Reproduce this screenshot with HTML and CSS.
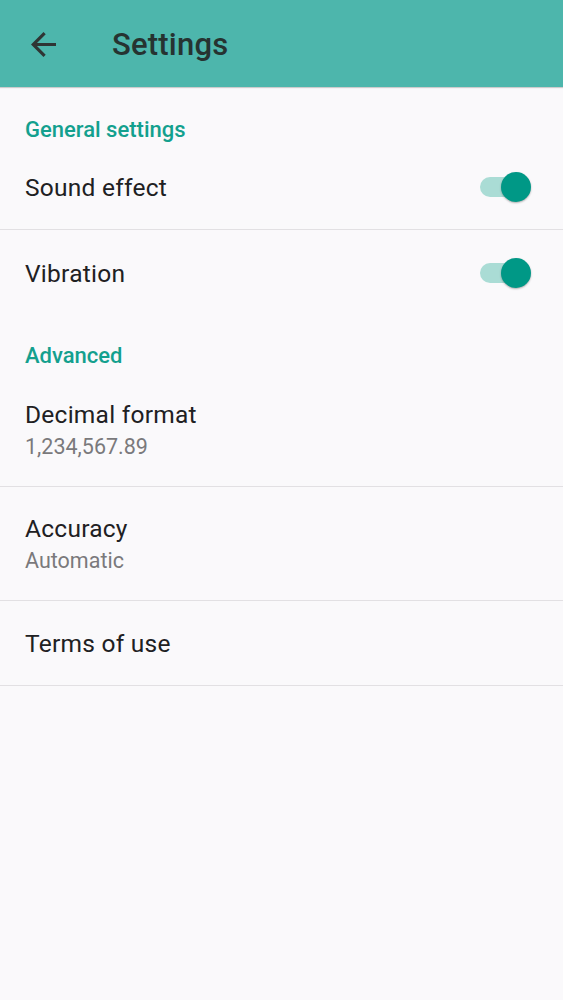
FILE: index.html
```html
<!DOCTYPE html>
<html lang="en">
<head>
<meta charset="utf-8">
<title>Settings</title>
<link rel="stylesheet" href="styles.css">
</head>
<body>
<header class="appbar">
  <svg class="back" viewBox="4 4 16 16" aria-hidden="true"><path d="M20 11H7.83l5.59-5.59L12 4l-8 8 8 8 1.41-1.41L7.83 13H20v-2z" fill="#2f3534"/></svg>
  <h1 class="title">Settings</h1>
</header>
<main class="list">
  <div class="category">General settings</div>
  <div class="row row-single row-divider">
    <span class="row-title">Sound effect</span>
    <span class="switch"><span class="track"></span><span class="thumb"></span></span>
  </div>
  <div class="row row-single">
    <span class="row-title">Vibration</span>
    <span class="switch"><span class="track"></span><span class="thumb"></span></span>
  </div>
  <div class="category category-second">Advanced</div>
  <div class="row row-double row-divider">
    <div class="row-text">
      <span class="row-title">Decimal format</span>
      <span class="row-sub">1,234,567.89</span>
    </div>
  </div>
  <div class="row row-double row-divider">
    <div class="row-text">
      <span class="row-title">Accuracy</span>
      <span class="row-sub">Automatic</span>
    </div>
  </div>
  <div class="row row-single row-divider">
    <span class="row-title">Terms of use</span>
  </div>
</main>
</body>
</html>
```

FILE: styles.css
```css
html, body {
  margin: 0;
  padding: 0;
}
body {
  background: #faf9fb;
  font-family: Roboto, "Noto Sans", "Liberation Sans", sans-serif;
  color: #212121;
  width: 563px;
  min-height: 1000px;
}
.appbar {
  height: 87px;
  background: #4db6ac;
  display: flex;
  align-items: center;
  box-shadow: 0 1px 1px rgba(0, 0, 0, 0.18);
  position: relative;
}
.back {
  width: 25px;
  height: 25px;
  margin-left: 31px;
  margin-top: 1px;
}
.title {
  margin: 2px 0 0 56px;
  font-size: 31px;
  font-weight: 500;
  letter-spacing: 0.2px;
  color: #263331;
  line-height: 1;
}
.list {
  display: flex;
  flex-direction: column;
}
.category {
  height: 58px;
  box-sizing: border-box;
  padding: 31px 25px 0;
  line-height: 24px;
  font-size: 22px;
  font-weight: 500;
  color: #13a08e;
}
.category-second {
  padding-top: 29px;
}
.row {
  display: flex;
  align-items: center;
  justify-content: space-between;
  padding: 0 32px 0 25px;
  box-sizing: border-box;
}
.row-divider {
  border-bottom: 1.5px solid #e2e0e3;
}
.row-single {
  height: 85px;
}
.row-double {
  height: 114px;
}
.row-single .row-title {
  padding-top: 2px;
}
.row-title {
  font-size: 24.5px;
  line-height: 30px;
  letter-spacing: 0.25px;
  color: #202022;
}
.row-text {
  display: flex;
  flex-direction: column;
  gap: 2px;
  padding-top: 3px;
}
.row-sub {
  font-size: 21.5px;
  line-height: 30px;
  color: #7a797c;
}
.switch {
  position: relative;
  width: 51px;
  height: 30px;
  display: flex;
  align-items: center;
}
.track {
  width: 48px;
  height: 20px;
  border-radius: 10px;
  background: #aadcd5;
}
.thumb {
  position: absolute;
  right: 0;
  top: 0;
  width: 30px;
  height: 30px;
  border-radius: 50%;
  background: #009886;
  box-shadow: 0 1px 2px rgba(0, 0, 0, 0.3);
}
```
